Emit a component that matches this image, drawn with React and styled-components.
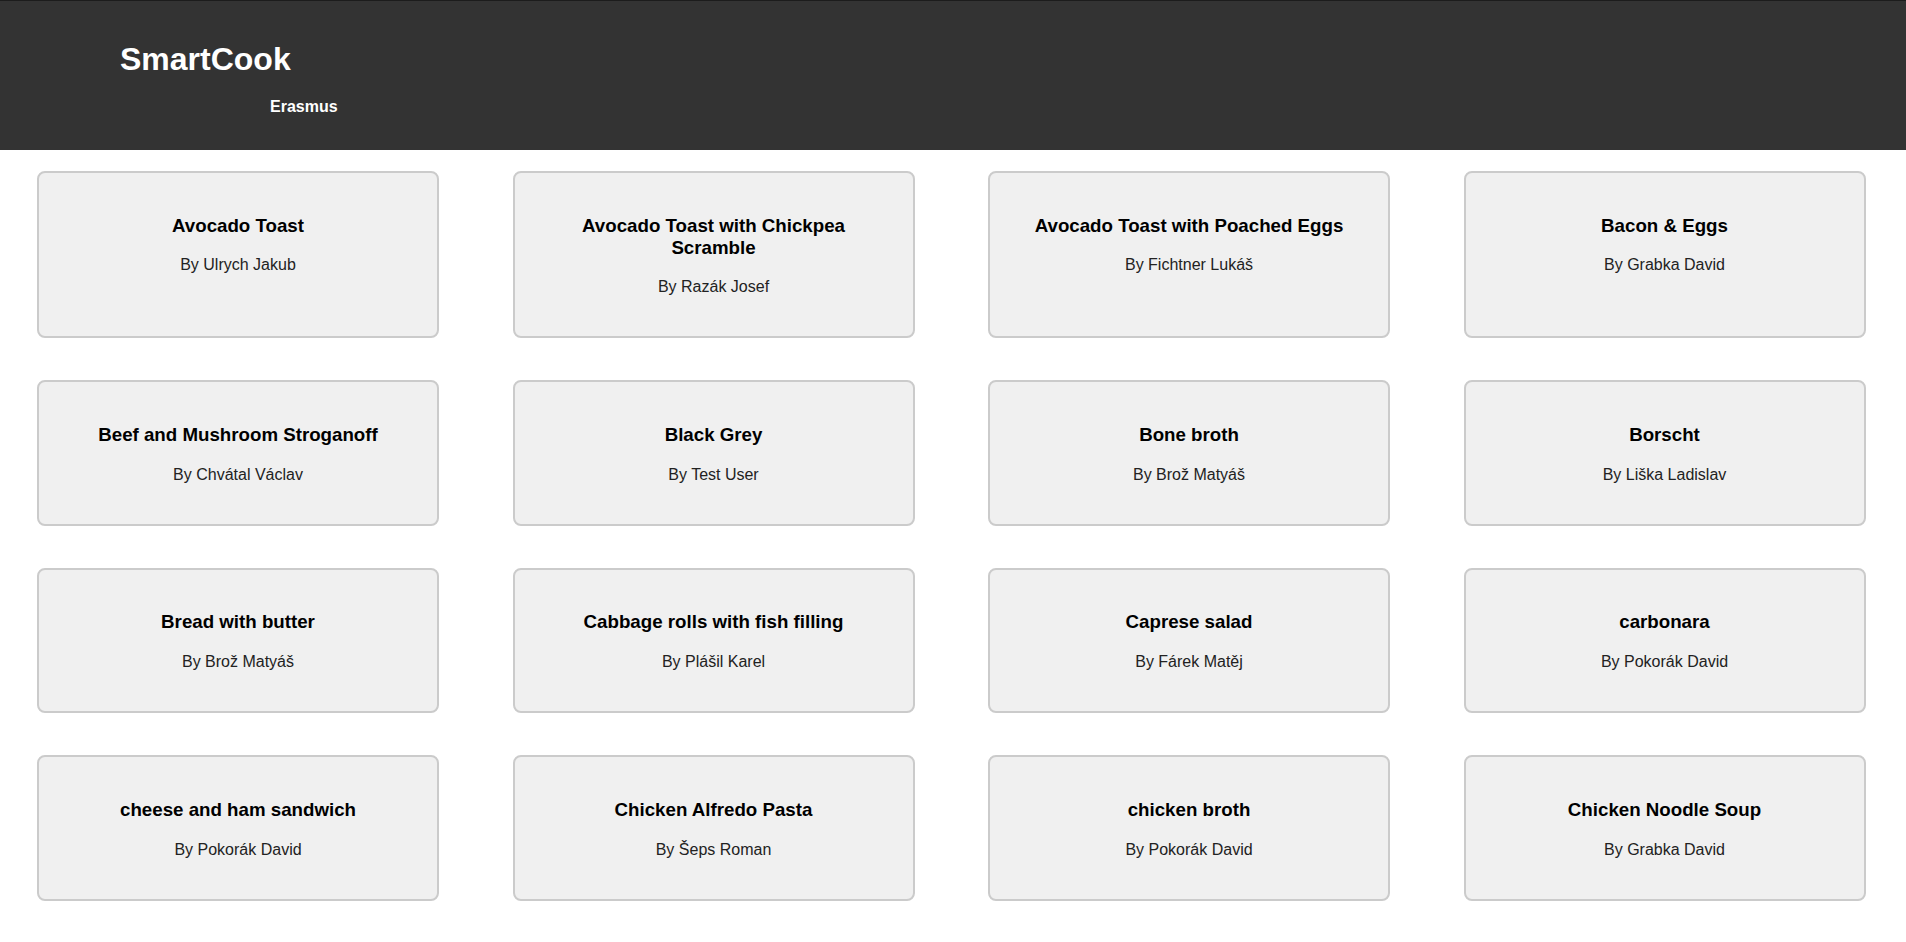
import React from "react";
import styled, { createGlobalStyle } from "styled-components";

const recipes = [
  { title: "Avocado Toast", author: "Ulrych Jakub" },
  { title: "Avocado Toast with Chickpea Scramble", author: "Razák Josef" },
  { title: "Avocado Toast with Poached Eggs", author: "Fichtner Lukáš" },
  { title: "Bacon & Eggs", author: "Grabka David" },
  { title: "Beef and Mushroom Stroganoff", author: "Chvátal Václav" },
  { title: "Black Grey", author: "Test User" },
  { title: "Bone broth", author: "Brož Matyáš" },
  { title: "Borscht", author: "Liška Ladislav" },
  { title: "Bread with butter", author: "Brož Matyáš" },
  { title: "Cabbage rolls with fish filling", author: "Plášil Karel" },
  { title: "Caprese salad", author: "Fárek Matěj" },
  { title: "carbonara", author: "Pokorák David" },
  { title: "cheese and ham sandwich", author: "Pokorák David" },
  { title: "Chicken Alfredo Pasta", author: "Šeps Roman" },
  { title: "chicken broth", author: "Pokorák David" },
  { title: "Chicken Noodle Soup", author: "Grabka David" },
  { title: "Chicken Soup", author: "Ulrych Jakub" },
  { title: "Chili con Carne", author: "Razák Josef" },
  { title: "Chocolate Cake", author: "Fichtner Lukáš" },
  { title: "Couscous salad", author: "Liška Ladislav" },
];

const GlobalStyle = createGlobalStyle`
  html {
    overflow-y: scroll;
  }
  html::-webkit-scrollbar {
    width: 4px;
  }
  html::-webkit-scrollbar-track {
    background: #f1f1f1;
    border-left: 1px solid #e4e4e4;
  }
  html::-webkit-scrollbar-thumb {
    background: #c4c4c4;
  }
  body {
    margin: 0;
    background: #fff;
    font-family: "Liberation Sans", Arial, sans-serif;
  }
`;

const Header = styled.header`
  box-sizing: border-box;
  height: 150px;
  background-color: #333;
  border-top: 1px solid #1c1c1c;
  padding: 40px 0 0 120px;
  color: #fff;
`;

const Logo = styled.h1`
  margin: 0;
  font-size: 32px;
  font-weight: bold;
`;

const Nav = styled.nav`
  margin: 20px 0 0 150px;
  font-size: 16px;
  font-weight: bold;
`;

const Grid = styled.main`
  display: grid;
  grid-template-columns: repeat(4, 402px);
  column-gap: 73.5px;
  row-gap: 42px;
  padding: 21px 0 40px 37px;
`;

const Card = styled.div`
  background-color: #f0f0f0;
  border: 2px solid #cbcbcb;
  border-radius: 8px;
  padding: 24px 30px;
  text-align: center;
`;

const Title = styled.h3`
  margin: 17.7px 0 19.7px;
  font-size: 18.72px;
  color: #000;
`;

const Author = styled.p`
  margin: 16px 0;
  font-size: 16px;
  color: #222;
`;

export default function App() {
  return (
    <>
      <GlobalStyle />
      <Header>
        <Logo>SmartCook</Logo>
        <Nav>Erasmus</Nav>
      </Header>
      <Grid>
        {recipes.map((r) => (
          <Card key={r.title}>
            <Title>{r.title}</Title>
            <Author>By {r.author}</Author>
          </Card>
        ))}
      </Grid>
    </>
  );
}
